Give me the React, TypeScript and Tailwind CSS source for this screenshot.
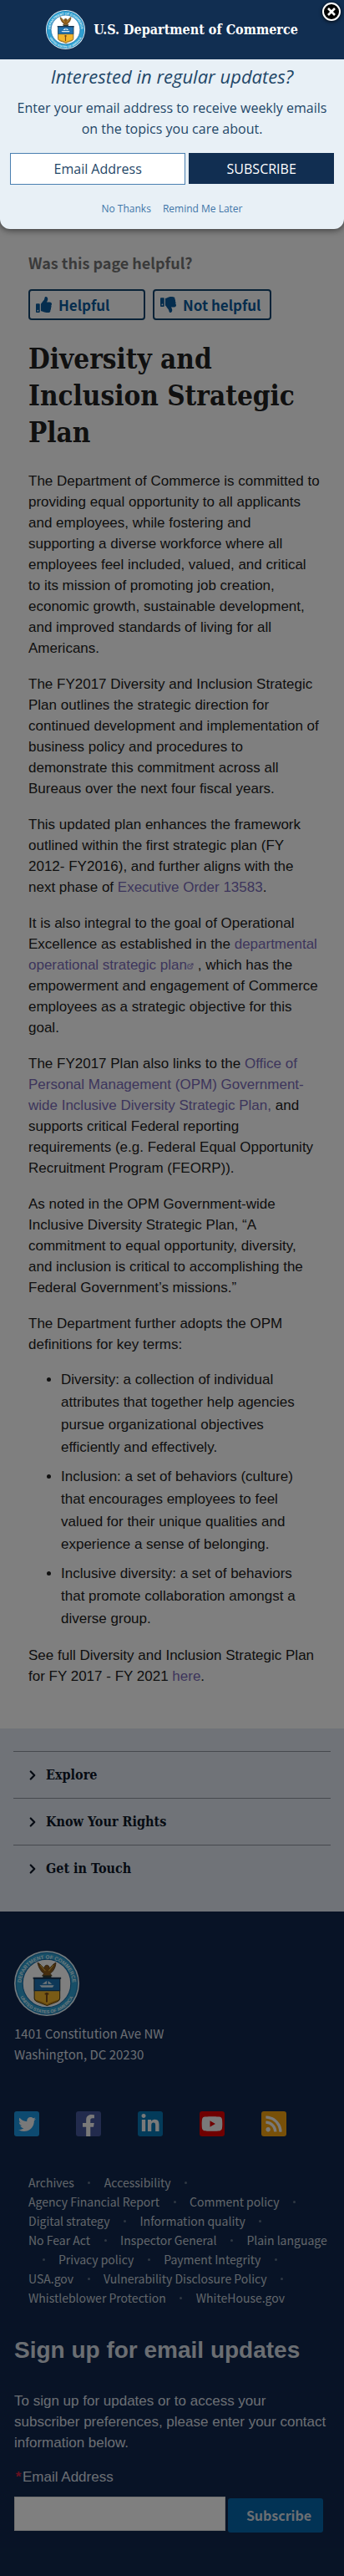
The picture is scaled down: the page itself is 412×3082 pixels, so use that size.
import React from "react";
import { FaThumbsUp, FaThumbsDown, FaTwitter, FaFacebookF, FaLinkedinIn, FaYoutube, FaRss } from "react-icons/fa";
import { ChevronRight, ExternalLink } from "lucide-react";

const serif = "font-['DejaVu_Serif_Condensed','DejaVu_Serif',serif]";
const source = "font-['Noto_Sans_CJK_JP','Open_Sans',sans-serif]";

function Seal({ className, id }: { className: string; id: string }) {
  return (
    <svg viewBox="0 0 100 100" className={className} role="img" aria-label="Seal of the U.S. Department of Commerce">
      <defs>
        <path id={`${id}-top`} d="M11 58 A39.500 39.500 0 1 1 89 58" />
        <path id={`${id}-bottom`} d="M5.500 60 A45.500 45.500 0 0 0 94.500 60" />
      </defs>
      <circle cx="50" cy="50" r="50" fill="#e8f4fa" />
      <circle cx="50" cy="50" r="48" fill="#2f9fd0" />
      <circle cx="50" cy="50" r="47" fill="none" stroke="#1c6fa8" strokeWidth="1" />
      <circle cx="50" cy="50" r="37" fill="#fff" stroke="#1c6fa8" strokeWidth="1.500" />
      <g fill="#d9eef7" fontFamily="Liberation Sans, sans-serif" fontWeight="700" fontSize="8">
        <text textAnchor="middle"><textPath href={`#${id}-top`} startOffset="50%">DEPARTMENT OF COMMERCE</textPath></text>
        <text textAnchor="middle" fontSize="7"><textPath href={`#${id}-bottom`} startOffset="50%">UNITED STATES OF AMERICA</textPath></text>
      </g>
      <path d="M36 18 C40 20 43 24 46 27 C46 24 48 22 50 22 C53 22 54 24 54 27 C57 24 60 20 64 18 C64 25 60 32 55 35 L58 38 H43 L46 35 C41 32 37 25 36 18Z" fill="#8a5a1c" stroke="#4e3413" strokeWidth="1" />
      <path d="M40 22 L48 31 M60 22 L53 31" stroke="#d3a53c" strokeWidth="1.500" />
      <rect x="44" y="38" width="13" height="3" fill="#2c3d35" />
      <path d="M31 42 H70 V73 C70 79 58 80 50.500 84 C43 80 31 79 31 73Z" fill="#f3b62c" stroke="#5b4716" strokeWidth="1.500" />
      <path d="M31 42 H70 V61 H31Z" fill="#1d70b0" stroke="#17456e" strokeWidth="1.500" />
      <path d="M29 42 H72" stroke="#17314e" strokeWidth="2.500" />
      <path d="M39 53 H61 L59 56 H42Z M43 51 L50 46 V51Z M52 51 V46 L58 51Z" fill="#dcebf3" />
      <path d="M50 64 V79 M47 66 H53" stroke="#7a4a18" strokeWidth="2.500" />
      <path d="M34 76 C42 79 46 80 50.500 83 C55 80 60 79 67 76" fill="none" stroke="#b37a1c" strokeWidth="1.500" />
    </svg>
  );
}

function UpdatesDialog() {
  return (
    <div
      role="dialog"
      aria-label="Interested in regular updates?"
      className="absolute inset-x-0 top-0 z-20 rounded-b-xl bg-[#e8f0f6] pb-[15px] font-['Open_Sans',sans-serif] text-[#1f4768] shadow-[0_1px_8px_rgba(0,0,0,0.6)]"
    >
      <div className="flex h-[71px] items-center justify-center gap-[10px] bg-[#112e51]">
        <Seal id="seal-dialog" className="size-[47px]" />
        <span className={`${serif} text-[16px] font-bold whitespace-nowrap text-white`}>U.S. Department of Commerce</span>
      </div>
      <button type="button" aria-label="Close" className="absolute top-[3px] right-1 flex size-[22px] items-center justify-center rounded-full border-2 border-white bg-black shadow-[0_1px_4px_rgba(0,0,0,0.8)]">
        <svg viewBox="0 0 10 10" className="size-[10px]" stroke="#fff" strokeWidth="2.600">
          <path d="M1 1 L9 9 M9 1 L1 9" />
        </svg>
      </button>
      <form className="px-3" onSubmit={(e) => e.preventDefault()}>
        <h2 className="pt-[6px] text-center text-[22px] leading-[28px] italic">Interested in regular updates?</h2>
        <p className="mt-3 text-center text-[16px] leading-[25px]">Enter your email address to receive weekly emails on the topics you care about.</p>
        <div className="mt-4 flex gap-1">
          <input
            type="email"
            aria-label="Email Address"
            placeholder="Email Address"
            className="h-[38px] min-w-0 flex-[6] border border-[#4a7fb0] bg-white text-center text-[16px] placeholder:text-[#1f4768]"
          />
          <button type="submit" className="h-[37px] flex-[5] bg-[#112e51] text-[16px] text-white">SUBSCRIBE</button>
        </div>
      </form>
      <div className="mt-5 flex justify-center gap-[14px] text-[12px] leading-[18px] text-[#3f76a8]">
        <a href="#no">No Thanks</a>
        <a href="#later">Remind Me Later</a>
      </div>
    </div>
  );
}

function Article() {
  const link = "text-[#7a6bb8]";
  const p = "mb-[18px]";
  return (
    <main className="bg-white pt-[300px] pr-[28px] pb-[50px] pl-[34px] font-['Liberation_Sans',sans-serif] text-[17px] leading-[25px] text-[#212121]">
      <div className={source}>
        <p className="text-[18px] leading-[28px] font-bold text-[#757575]">Was this page helpful?</p>
        <div className="mt-[18px] flex gap-[9px] text-[17px] leading-[26px] font-bold text-[#0a5a9c]">
          <button type="button" className="flex h-[37px] w-[140px] items-center gap-2 rounded border-2 border-[#12456f] px-[7px]">
            <FaThumbsUp className="size-[19px]" />
            Helpful
          </button>
          <button type="button" className="flex h-[37px] w-[142px] items-center gap-2 rounded border-2 border-[#12456f] px-[7px] whitespace-nowrap">
            <FaThumbsDown className="size-[19px]" />
            Not helpful
          </button>
        </div>
      </div>
      <h1 className={`${serif} mt-[25px] mb-[23px] text-[33px] leading-[44px] font-bold`}>Diversity and Inclusion Strategic Plan</h1>
      <p className={p}>
        The Department of Commerce is committed to providing equal opportunity to all applicants and employees, while
        fostering and supporting&nbsp;a diverse workforce where all employees feel included, valued, and critical to
        its mission of promoting job creation, economic growth, sustainable development, and improved standards of
        living for&nbsp;all Americans.
      </p>
      <p className={p}>
        The FY2017 Diversity and Inclusion Strategic Plan outlines the strategic direction for continued development
        and implementation of business policy and procedures to demonstrate this commitment across all Bureaus over
        the next four fiscal years.
      </p>
      <p className={p}>
        This updated plan enhances the framework outlined within the first strategic plan (FY 2012- FY2016), and
        further aligns with the next phase of <a href="#eo" className={link}>Executive Order 13583</a>.
      </p>
      <p className={p}>
        It is also integral to the goal of Operational Excellence as established in the{" "}
        <a href="#plan" className={link}>departmental operational strategic plan<ExternalLink className="inline size-2" strokeWidth={3} aria-hidden /></a>{" "}
        , which has the empowerment and engagement of Commerce employees as a strategic objective for this goal.
      </p>
      <p className={p}>
        The FY2017 Plan also links to the{" "}
        <a href="#opm" className={link}>Office of Personal Management (OPM) Government-wide Inclusive Diversity Strategic Plan,</a>{" "}
        and supports critical Federal reporting requirements (e.g. Federal Equal Opportunity Recruitment Program
        (FEORP)).
      </p>
      <p className={p}>
        As noted in the OPM Government-wide Inclusive Diversity Strategic Plan, “A commitment to equal opportunity,
        diversity, and inclusion is critical to accomplishing the Federal Government’s missions.”
      </p>
      <p className="mb-4">The Department further adopts the OPM definitions for key terms:</p>
      <ul className="mb-[18px] list-disc space-y-2 pr-5 pl-[39px] leading-[27px]">
        <li>Diversity: a collection of individual attributes that together help agencies pursue organizational objectives efficiently and effectively.</li>
        <li>Inclusion: a set of behaviors (culture) that encourages employees to feel valued for their unique qualities and experience a sense of belonging.</li>
        <li>Inclusive diversity: a set of behaviors that promote collaboration amongst a diverse group.</li>
      </ul>
      <p>
        See full Diversity and Inclusion Strategic Plan for FY 2017 - FY 2021 <a href="#here" className={link}>here</a>.
      </p>
    </main>
  );
}

function Sections() {
  return (
    <nav aria-label="Sections" className="bg-[#e1e7f1] px-4 pt-[27px] pb-6">
      {["Explore", "Know Your Rights", "Get in Touch"].map((t) => (
        <button
          key={t}
          type="button"
          className={`${serif} flex h-14 w-full items-center gap-[7px] border-t border-[#8d939c] pl-[14px] text-left text-[16px] font-bold text-[#0c1626]`}
        >
          <ChevronRight className="size-[18px]" strokeWidth={3} />
          {t}
        </button>
      ))}
    </nav>
  );
}

const social = [
  { name: "Twitter", Icon: FaTwitter, box: "items-center bg-[#1b95e0]", icon: "size-[21px]" },
  { name: "Facebook", Icon: FaFacebookF, box: "items-end bg-[#45569a]", icon: "size-[26px]" },
  { name: "LinkedIn", Icon: FaLinkedinIn, box: "items-center bg-[#0677b5]", icon: "size-[24px]" },
  { name: "YouTube", Icon: FaYoutube, box: "items-center bg-[#e00000]", icon: "size-[26px]" },
  { name: "RSS", Icon: FaRss, box: "items-center bg-[#f0a010]", icon: "size-[22px]" },
];

const links = [
  "Archives", "Accessibility", "Agency Financial Report", "Comment policy", "Digital strategy", "Information quality",
  "No Fear Act", "Inspector General", "Plain language", "Privacy policy", "Payment Integrity", "USA.gov",
  "Vulnerability Disclosure Policy", "Whistleblower Protection", "WhiteHouse.gov",
];

function Footer() {
  return (
    <footer className="bg-[#10274c] px-[17px] pt-[47px] pb-[54px] font-['Liberation_Sans',sans-serif] text-[17px] leading-[25px] text-[#d6dce4]">
      <Seal id="seal-footer" className="size-[78px]" />
      <address className={`${source} mt-2 text-[15px] not-italic`}>
        1401 Constitution Ave NW
        <br />
        Washington, DC 20230
      </address>
      <ul className="mt-14 flex gap-11">
        {social.map(({ name, Icon, box, icon }) => (
          <li key={name}>
            <a href={`#${name}`} aria-label={name} className={`flex size-[30px] justify-center rounded-[3px] text-[#f2f2f2] ${box}`}>
              <Icon className={icon} />
            </a>
          </li>
        ))}
      </ul>
      <ul className={`${source} mt-[44px] flex flex-wrap pl-[17px] text-[14px] leading-[23px] text-[#c3cbd5]`}>
        {links.map((t, i) => (
          <React.Fragment key={t}>
            <li><a href={`#${t}`} className="whitespace-nowrap">{t}</a></li>
            {i < links.length - 1 && (
              <li aria-hidden="true" className="flex w-9 items-center justify-center">
                <span className="size-[3px] rounded-full bg-[#5f7186]" />
              </li>
            )}
          </React.Fragment>
        ))}
      </ul>
      <form onSubmit={(e) => e.preventDefault()}>
        <h2 className="mt-[35px] text-[28px] leading-[32px] font-bold">Sign up for email updates</h2>
        <p className="mt-8">To sign up for updates or to access your subscriber preferences, please enter your contact information below.</p>
        <label htmlFor="footer-email" className="mt-4 flex">
          <span aria-hidden="true" className="w-[10px] text-center font-bold text-[#d02040]">*</span>
          Email Address
        </label>
        <div className="mt-[11px] flex items-end gap-[3px] pr-2">
          <input id="footer-email" type="email" className="mb-[2px] h-[41px] min-w-0 flex-1 border border-[#e0e0e0] bg-white px-2 text-black" />
          <button type="submit" className={`${source} h-[41px] w-[114px] rounded-[3px] bg-[#0566ab] pl-2 text-[16px] font-bold`}>Subscribe</button>
        </div>
      </form>
    </footer>
  );
}

export default function App() {
  return (
    <div className="relative">
      <Article />
      <Sections />
      <Footer />
      <div className="absolute inset-0 z-10 bg-black/50" />
      <UpdatesDialog />
    </div>
  );
}
